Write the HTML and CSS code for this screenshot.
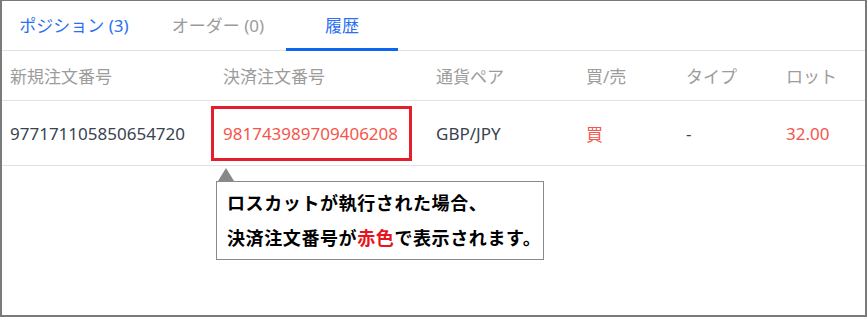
FILE: index.html
```html
<!DOCTYPE html>
<html lang="ja">
<head>
<meta charset="utf-8">
<link rel="stylesheet" href="styles.css">
</head>
<body>
<div class="frame">
  <div class="tabs">
    <div class="tab tab-active-text tab-first">ポジション (3)</div>
    <div class="tab tab-muted tab-second">オーダー (0)</div>
    <div class="tab tab-active-text tab-selected">履歴</div>
  </div>
  <div class="table">
    <div class="row head">
      <div class="cell">新規注文番号</div>
      <div class="cell">決済注文番号</div>
      <div class="cell">通貨ペア</div>
      <div class="cell">買/売</div>
      <div class="cell">タイプ</div>
      <div class="cell">ロット</div>
    </div>
    <div class="row data">
      <div class="cell">977171105850654720</div>
      <div class="cell red"><span class="marked">981743989709406208</span></div>
      <div class="cell">GBP/JPY</div>
      <div class="cell red">買</div>
      <div class="cell">-</div>
      <div class="cell red">32.00</div>
    </div>
  </div>
  <div class="tooltip">
    <p class="tip-line">ロスカットが執行された場合、</p>
    <p class="tip-line">決済注文番号が<span class="tip-red">赤色</span>で表示されます。</p>
  </div>
</div>
</body>
</html>
```
FILE: styles.css
```css
* { box-sizing: border-box; }
html, body { margin: 0; padding: 0; background: #fff; }
.frame {
  position: relative;
  width: 867px;
  height: 317px;
  border: 2px solid #7a7a7a;
  border-top-width: 1px;
  font-family: "Noto Sans", "Noto Sans CJK JP", sans-serif;
  font-size: 17px;
  overflow: hidden;
}
.tabs {
  display: flex;
  height: 50px;
  padding-left: 16px;
  border-bottom: 1px solid #e2e2e2;
}
.tab {
  min-width: 112px;
  height: 50px;
  line-height: 50px;
  text-align: center;
  white-space: nowrap;
}
.tab-first { margin-right: 32px; }
.tab-second { margin-right: 12px; }
.tab-active-text { color: #2a6ef3; }
.tab-muted { color: #9b9b9b; }
.tab-selected { box-shadow: inset 0 -3px 0 #0d66f2; }
.row {
  display: grid;
  grid-template-columns: 213px 213px 150px 100px 100px 1fr;
  padding-left: 8px;
  border-bottom: 1px solid #e2e2e2;
  align-items: center;
}
.head { height: 50px; color: #9c9c9c; }
.data { height: 65px; color: #3a4350; }
.cell { white-space: nowrap; }
.red { color: #f5564b; }
.marked { position: relative; }
.marked::before {
  content: "";
  position: absolute;
  left: -12px;
  right: -14px;
  top: -16px;
  bottom: -16px;
  border: 3px solid #e41e2c;
}
.tooltip {
  position: absolute;
  left: 214px;
  top: 180px;
  width: 328px;
  height: 79px;
  border: 1px solid #8a8a8a;
  background: #fff;
  padding: 3px 0 0 10px;
  font-family: "Noto Sans CJK JP", sans-serif;
  font-weight: 700;
  font-size: 18px;
  letter-spacing: 0.6px;
  color: #000;
}
.tooltip::before {
  content: "";
  position: absolute;
  left: 1px;
  top: -14px;
  border-left: 8px solid transparent;
  border-right: 8px solid transparent;
  border-bottom: 13px solid #888;
}
.tip-line { margin: 0; line-height: 35px; white-space: nowrap; }
.tip-red { color: #e8141c; }
```
